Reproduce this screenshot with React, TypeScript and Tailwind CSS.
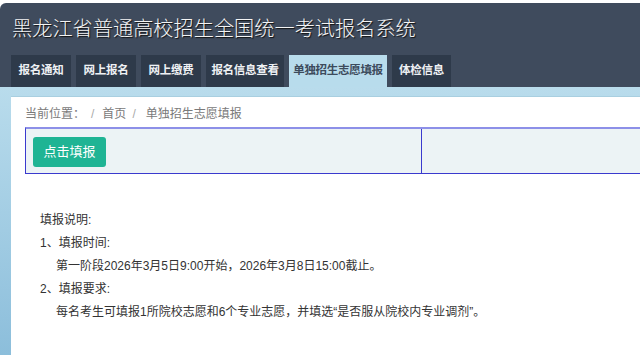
import React from "react";

const tabs = [
  { label: "报名通知", w: "w-[60px]" },
  { label: "网上报名", w: "w-[60px]" },
  { label: "网上缴费", w: "w-[60px]" },
  { label: "报名信息查看", w: "w-[78px]" },
  { label: "单独招生志愿填报", w: "w-[98px]" },
  { label: "体检信息", w: "w-[59px]" },
];
const active = "单独招生志愿填报";

export default function App() {
  return (
    <div
      className="w-[640px] h-[355px] overflow-hidden bg-white"
      style={{ fontFamily: '"Liberation Sans", "Noto Sans CJK SC", sans-serif' }}
    >
      {/* Header */}
      <div className="mt-[3px] h-[84px] rounded-tl-[6px] bg-[#3f4b5d] flex flex-col">
        <h1
          className="pl-[12px] pt-[10px] h-[52px] text-[20.2px] leading-[30px] text-[#f4f4f4] font-light whitespace-nowrap [text-shadow:1px_1px_1px_#111]"
          style={{ fontFamily: '"Noto Sans CJK SC", serif' }}
        >
          黑龙江省普通高校招生全国统一考试报名系统
        </h1>
        <div className="flex gap-[5px] pl-[11px] items-end">
          {tabs.map((t) => (
            <div
              key={t.label}
              className={`${t.w} h-[32px] flex items-center justify-center text-[11.5px] font-bold tracking-[-0.3px] whitespace-nowrap ${
                t.label === active ? "bg-[#b8dcec] text-[#3d4b5c]" : "bg-[#2e3a4a] text-[#eef1f4]"
              }`}
            >
              {t.label}
            </div>
          ))}
        </div>
      </div>

      {/* Body */}
      <div className="h-[268px] pl-[11px] pt-[9px] bg-gradient-to-b from-[#b9dcec] to-[#8cbedb]">
        <div className="h-full bg-white border-t border-[#a9cfe0] pl-[14px]">
          <div className="h-[30px] flex items-center pt-[3px] text-[12px] text-[#7a7a7a] whitespace-nowrap">
            <span>当前位置：</span>
            <span className="ml-[6px] text-[#aaa]">/</span>
            <span className="ml-[8px]">首页</span>
            <span className="ml-[6px] text-[#aaa]">/</span>
            <span className="ml-[10px]">单独招生志愿填报</span>
          </div>
          <div className="flex h-[47px] border-t-2 border-t-[#8d90e8] border-b border-l border-[#3a3ace] bg-[#ecf3f5]">
            <div className="w-[396px] shrink-0 border-r border-[#3a3ace] pl-[7px] pt-[8px]">
              <button className="h-[30px] w-[73px] rounded-[3px] bg-[#1fb494] text-white text-[13px]">
                点击填报
              </button>
            </div>
            <div className="flex-1" />
          </div>
          <div className="mt-[35px] pl-[15px] text-[12px] leading-[23px] text-[#333]">
            <p>填报说明:</p>
            <p>1、填报时间:</p>
            <p className="pl-[16px]">第一阶段2026年3月5日9:00开始，2026年3月8日15:00截止。</p>
            <p>2、填报要求:</p>
            <p className="pl-[16px]">每名考生可填报1所院校志愿和6个专业志愿，并填选“是否服从院校内专业调剂”。</p>
          </div>
        </div>
      </div>
    </div>
  );
}
